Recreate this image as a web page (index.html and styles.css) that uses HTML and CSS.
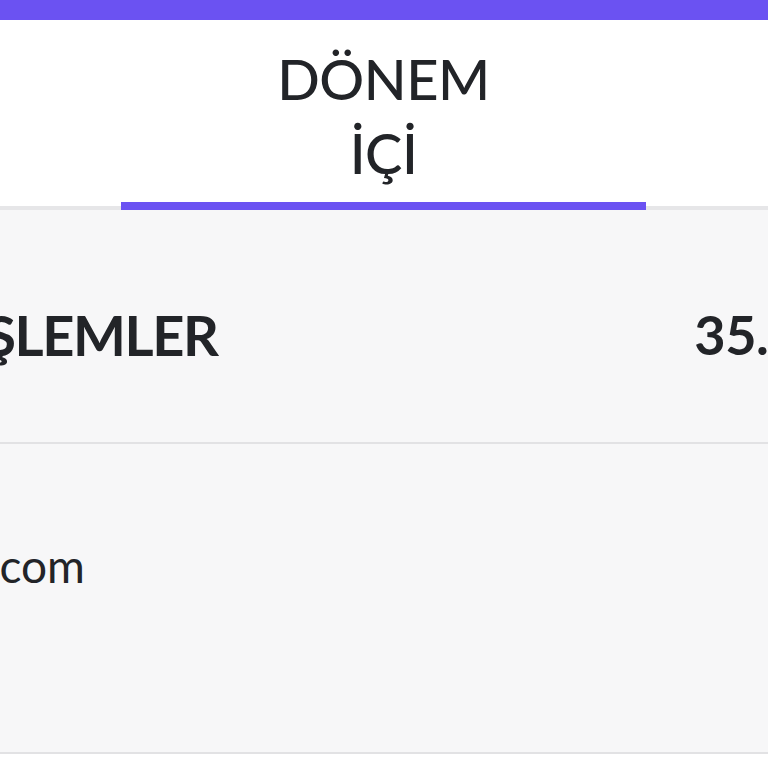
FILE: index.html
```html
<!DOCTYPE html>
<html lang="tr">
<head>
<meta charset="utf-8">
<title>Dönem İçi</title>
<link rel="stylesheet" href="styles.css">
</head>
<body>
  <div class="topbar"></div>
  <nav class="tabs">
    <div class="tab active">
      <span class="tab-label">DÖNEM<br>İÇİ</span>
      <span class="indicator"></span>
    </div>
  </nav>
  <main class="panel">
    <section class="row row-total">
      <span class="title">İŞLEMLER</span>
      <span class="amount">35.000,00 TL</span>
    </section>
    <section class="row row-mail">
      <span class="mail">destek@ornek.com</span>
    </section>
  </main>
  <footer class="bottom"></footer>
</body>
</html>
```

FILE: styles.css
```css
* { box-sizing: border-box; }

html, body {
  margin: 0;
  padding: 0;
  width: 768px;
  height: 768px;
  overflow: hidden;
  background: #ffffff;
  font-family: "Lato", "Noto Sans", sans-serif;
  color: #222428;
}

.topbar {
  height: 20px;
  background: #6b52f2;
}

.tabs {
  height: 190px;
  display: flex;
  justify-content: center;
  align-items: stretch;
  background: #ffffff;
  border-bottom: 4px solid #e6e6e8;
}

.tab {
  width: 525px;
  display: flex;
  flex-direction: column;
  align-items: center;
  margin-left: -1px;
}

.tab-label {
  flex: 1;
  padding-top: 22px;
  font-size: 56px;
  font-weight: 500;
  line-height: 74px;
  letter-spacing: -0.5px;
  text-align: center;
}

.indicator {
  align-self: stretch;
  height: 8px;
  margin-bottom: -4px;
  background: #6b52f2;
}

.panel {
  background: #f7f7f8;
}

.row {
  display: flex;
  align-items: center;
  border-bottom: 2px solid #e2e2e4;
}

.row-total {
  height: 234px;
  justify-content: space-between;
  padding-top: 16px;
}

.title {
  margin-left: -30px;
  font-size: 56px;
  font-weight: 700;
  letter-spacing: -1.4px;
}

.amount {
  margin-right: -237px;
  font-size: 54px;
  font-weight: 700;
  letter-spacing: -0.5px;
}

.row-mail {
  height: 310px;
  padding-bottom: 66px;
}

.mail {
  margin-left: -300px;
  font-size: 46px;
  font-weight: 400;
}

.bottom {
  height: 20px;
  background: #ffffff;
}
```
